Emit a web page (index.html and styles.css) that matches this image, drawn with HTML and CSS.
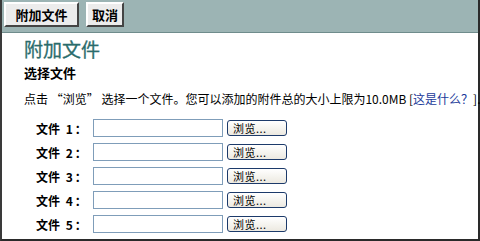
FILE: index.html
```html
<!DOCTYPE html>
<html lang="zh-CN">
<head>
<meta charset="utf-8">
<title>附加文件</title>
<link rel="stylesheet" href="styles.css">
</head>
<body>
<div class="frame">
  <div class="toolbar">
    <button class="tb-btn tb-attach">附加文件</button>
    <button class="tb-btn tb-cancel">取消</button>
  </div>
  <div class="content">
    <h1 class="title">附加文件</h1>
    <h2 class="subtitle">选择文件</h2>
    <p class="desc">点击 “浏览” 选择一个文件。您可以添加的附件总的大小上限为10.0MB [<a class="help" href="#">这是什么？</a>].</p>
    <div class="rows">
      <div class="row"><span class="label">文件 <span class="num">1：</span></span><span class="file"></span><span class="browse">浏览...</span></div>
      <div class="row"><span class="label">文件 <span class="num">2：</span></span><span class="file"></span><span class="browse">浏览...</span></div>
      <div class="row"><span class="label">文件 <span class="num">3：</span></span><span class="file"></span><span class="browse">浏览...</span></div>
      <div class="row"><span class="label">文件 <span class="num">4：</span></span><span class="file"></span><span class="browse">浏览...</span></div>
      <div class="row"><span class="label">文件 <span class="num">5：</span></span><span class="file"></span><span class="browse">浏览...</span></div>
    </div>
  </div>
</div>
</body>
</html>
```

FILE: styles.css
```css
html, body {
  margin: 0;
  padding: 0;
  background: #ffffff;
}
body {
  font-family: "Noto Sans CJK SC", "Liberation Sans", sans-serif;
  color: #000;
  overflow: hidden;
}
.frame {
  width: 480px;
  height: 241px;
  box-sizing: border-box;
  border-left: 2px solid #3a3a3a;
  border-right: 2px solid #2a2a2a;
  border-bottom: 2px solid #2a2a2a;
  display: flex;
  flex-direction: column;
}
.toolbar {
  height: 33px;
  box-sizing: border-box;
  background: #9cb4b4;
  border-bottom: 1px solid #6f8c8c;
  display: flex;
  align-items: flex-start;
  gap: 7px;
  padding: 2px 0 0 2px;
}
.tb-btn {
  height: 25px;
  box-sizing: border-box;
  background: #ececec;
  border-top: 2px solid #ffffff;
  border-left: 2px solid #ffffff;
  border-right: 2px solid #444444;
  border-bottom: 2px solid #444444;
  font-family: "Noto Sans CJK SC", sans-serif;
  font-weight: bold;
  font-size: 13px;
  line-height: 19px;
  padding: 0;
  color: #000;
}
.tb-attach { width: 75px; }
.tb-cancel { width: 38px; }
.content {
  flex: 1;
  padding: 0 0 0 22px;
}
.title {
  margin: 4px 0 0 0;
  font-size: 19px;
  line-height: 24px;
  font-weight: normal;
  color: #2a6c6c;
  -webkit-text-stroke: 0.3px #2a6c6c;
}
.subtitle {
  margin: 4px 0 0 0;
  font-size: 13px;
  line-height: 16px;
  font-weight: bold;
}
.desc {
  margin: 10px 0 0 0;
  font-size: 12px;
  line-height: 16px;
  white-space: nowrap;
}
.help {
  color: #1b3a9a;
  text-decoration: none;
}
.rows {
  margin: 12px 0 0 12px;
  display: flex;
  flex-direction: column;
  gap: 6px;
}
.row {
  display: flex;
  align-items: center;
  height: 18px;
}
.label {
  width: 57px;
  font-size: 12px;
  font-weight: bold;
  word-spacing: 3px;
}
.num {
  letter-spacing: 2px;
}
.file {
  width: 130px;
  height: 18px;
  box-sizing: border-box;
  border: 1px solid #7f9db9;
  background: #fff;
}
.browse {
  margin-left: 4px;
  width: 60px;
  height: 16px;
  box-sizing: border-box;
  border: 1px solid #1c3a6a;
  border-radius: 3px;
  background: linear-gradient(#ffffff, #ece9e0);
  font-size: 11px;
  line-height: 14px;
  padding-left: 5px;
  letter-spacing: 0.5px;
}
```
